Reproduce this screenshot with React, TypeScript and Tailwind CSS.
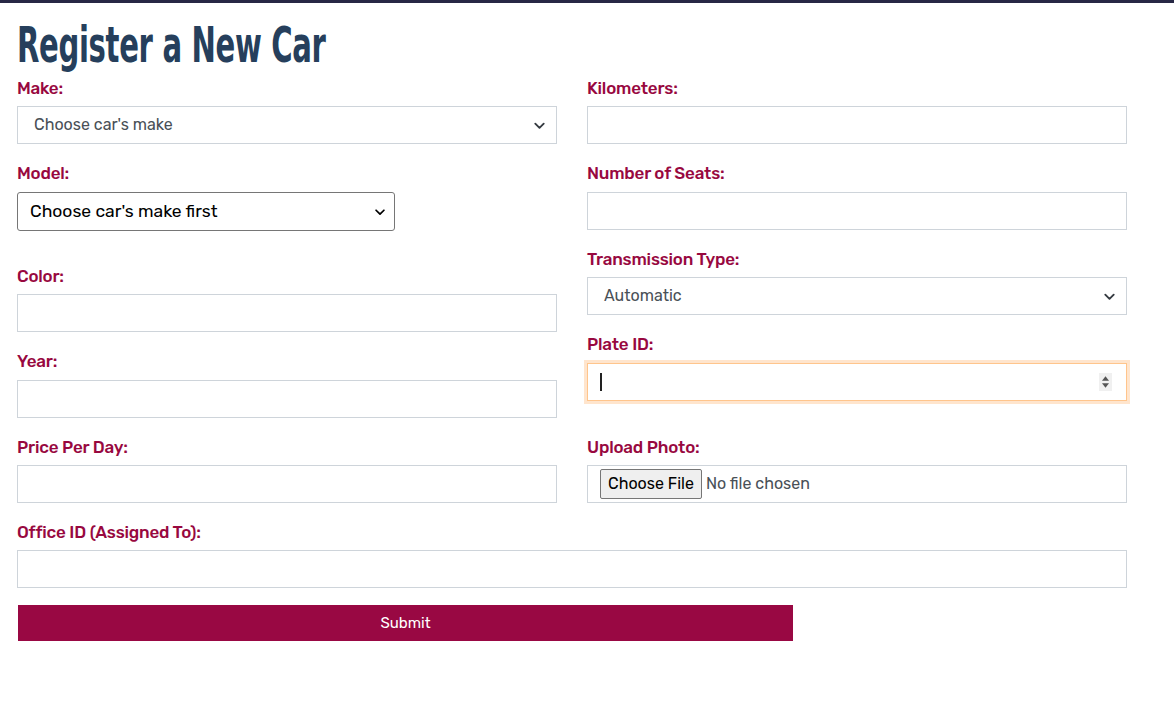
import React from "react";

const labelCls =
  "block h-6 leading-6 text-[17px] font-medium text-[#98083f] tracking-[-0.2px]";
const inputCls =
  "block w-full h-[38px] border border-[#ced4da] bg-white";

function Chevron({ className = "" }: { className?: string }) {
  return (
    <svg viewBox="0 0 16 16" className={className} fill="none" stroke="currentColor" strokeWidth="2" strokeLinecap="round" strokeLinejoin="round">
      <path d="M3.5 6l4.5 4.5L12.5 6" />
    </svg>
  );
}

function FakeSelect({ text }: { text: string }) {
  return (
    <div className={`${inputCls} flex items-center justify-between pl-4 pr-[9px]`}>
      <span className="text-[16px] text-[#495057]">{text}</span>
      <Chevron className="w-[15px] h-[15px] text-[#343a40]" />
    </div>
  );
}

export default function App() {
  return (
    <div
      className="min-h-[704px] w-[1174px] bg-white border-t-[3px] border-[#272845]"
      style={{ fontFamily: "Rubik, Roboto, 'Noto Sans', sans-serif" }}
    >
      <div className="pl-[17px] w-[1127px]">
        <h1
          className="h-[73px] pt-[18px] text-[49px] leading-[50px] font-bold text-[#263f5c] whitespace-nowrap"
          style={{ fontFamily: "'Liberation Sans Narrow', 'DejaVu Sans Condensed', 'Roboto Condensed', Roboto, sans-serif" }}
        >
          <span className="inline-block origin-left scale-x-[0.66] tracking-[-0.5px]">Register a New Car</span>
        </h1>

        <div className="grid grid-cols-[540px_540px] gap-x-[30px]">
          {/* Left column */}
          <div className="flex flex-col">
            <label className={labelCls}>Make:</label>
            <div className="mt-[6px]">
              <FakeSelect text="Choose car's make" />
            </div>

            <label className={`${labelCls} mt-[17px]`}>Model:</label>
            <div className="mt-[7px] w-[378px] h-[39px] border border-[#767676] rounded-[3px] flex items-center justify-between pl-[12px] pr-[7px]">
              <span className="text-[17.5px] text-black">Choose car's make first</span>
              <Chevron className="w-[14px] h-[14px] text-black" />
            </div>

            <label className={`${labelCls} mt-[33px]`}>Color:</label>
            <div className={`${inputCls} mt-[6px]`} />

            <label className={`${labelCls} mt-[17px]`}>Year:</label>
            <div className={`${inputCls} mt-[7px]`} />

            <label className={`${labelCls} mt-[17px]`}>Price Per Day:</label>
            <div className={`${inputCls} mt-[6px]`} />
          </div>

          {/* Right column */}
          <div className="flex flex-col">
            <label className={labelCls}>Kilometers:</label>
            <div className={`${inputCls} mt-[6px]`} />

            <label className={`${labelCls} mt-[17px]`}>Number of Seats:</label>
            <div className={`${inputCls} mt-[7px]`} />

            <label className={`${labelCls} mt-[17px]`}>Transmission Type:</label>
            <div className="mt-[6px]">
              <FakeSelect text="Automatic" />
            </div>

            <label className={`${labelCls} mt-[17px]`}>Plate ID:</label>
            <div className="mt-[7px] h-[38px] w-full border border-[#ffc58c] bg-white shadow-[0_0_0_3px_rgba(255,170,90,0.3)] flex items-center justify-between pl-[12px] pr-[14px]">
              <div className="w-[2px] h-[18px] bg-[#222]" />
              <div className="w-[13px] h-[18px] bg-[#f0f0f0] flex flex-col items-center justify-center gap-[2px]">
                <svg viewBox="0 0 8 5" className="w-[7px] h-[5px]"><path d="M4 0L8 5H0z" fill="#555" /></svg>
                <svg viewBox="0 0 8 5" className="w-[7px] h-[5px]"><path d="M0 0H8L4 5z" fill="#555" /></svg>
              </div>
            </div>

            <label className={`${labelCls} mt-[34px]`}>Upload Photo:</label>
            <div className={`${inputCls} mt-[6px] flex items-center pl-[12px]`}>
              <div className="h-[30px] px-[7px] bg-[#efefef] border border-[#767676] rounded-[2px] flex items-center text-[16px] text-black">
                Choose File
              </div>
              <span className="ml-[4px] text-[16px] text-[#495057]">No file chosen</span>
            </div>
          </div>
        </div>

        <label className={`${labelCls} mt-[17px]`}>Office ID (Assigned To):</label>
        <div className={`${inputCls} mt-[6px]`} />

        <button className="mt-[17px] ml-px w-[775px] h-[36px] bg-[#990843] text-white text-[15px] flex items-center justify-center">
          Submit
        </button>
      </div>
    </div>
  );
}
